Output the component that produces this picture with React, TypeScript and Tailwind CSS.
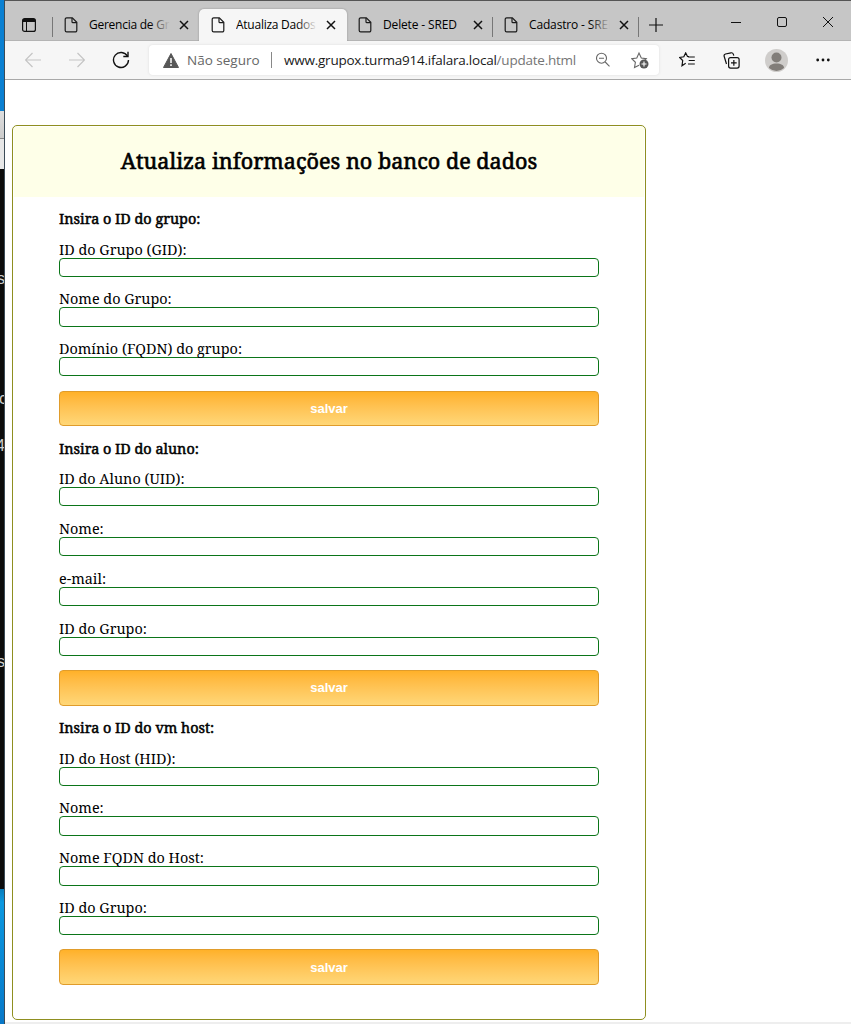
import React from "react";

type TabProps = { title: string; width: string; layout: string; tracking: string; active?: boolean; fade?: boolean };

function PageIcon() {
  return (
    <svg className="h-4 w-3.5 shrink-0" viewBox="0 0 14 16" fill="none" stroke="#1b1b1b" strokeWidth="1.2">
      <path d="M2.700 .8H8.300L12.800 5.300V13.400a1.500 1.500 0 0 1-1.500 1.500H2.700a1.500 1.500 0 0 1-1.500-1.500V2.300a1.500 1.500 0 0 1 1.500-1.500z" />
      <path d="M8 1v3.700a1 1 0 0 0 1 1h3.700" />
    </svg>
  );
}

function CloseIcon() {
  return (
    <svg className="h-2.5 w-2.5 shrink-0" viewBox="0 0 10 10" stroke="#111" strokeWidth="1.5">
      <path d="M1 1l8 8M9 1L1 9" />
    </svg>
  );
}

function Tab({ title, width, layout, tracking, active, fade }: TabProps) {
  return (
    <div
      className={`flex shrink-0 items-center ${width} ${layout} ${
        active ? "h-8 rounded-t-[5px] bg-[#f6f6f6] shadow-[0_0_2px_#888]" : "h-8"
      }`}
    >
      <PageIcon />
      <div className={`relative ml-[11px] w-[81px] overflow-hidden whitespace-nowrap text-[12px] leading-4 ${tracking}`}>
        {title}
        {fade && (
          <div
            className={`absolute inset-y-0 right-0 w-5 bg-linear-to-r ${
              active ? "from-[#f6f6f600] to-[#f6f6f6]" : "from-[#c6c6c600] to-[#c6c6c6]"
            }`}
          />
        )}
      </div>
      <div className="ml-[8.5px] flex">
        <CloseIcon />
      </div>
    </div>
  );
}

function Separator() {
  return <div className="mt-1 h-5 w-px shrink-0 bg-[#777]" />;
}

function TabBar() {
  return (
    <div className="flex h-[41px] items-end border-t border-[#555] bg-[#c6c6c6] shadow-[inset_0_-1px_0_#b4b4b4]">
      <div className="flex h-8 w-[47px] shrink-0 items-center pl-[17px]">
        <svg className="h-3.5 w-3.5" viewBox="0 0 14 14" fill="none" stroke="#111">
          <rect x=".6" y=".6" width="12.800" height="12.800" rx="2" strokeWidth="1.200" />
          <path d="M1 2.500h12" strokeWidth="3" />
          <path d="M4.500 4v9" />
        </svg>
      </div>
      <div className="flex h-8 items-center">
        <Separator />
        <Tab title="Gerencia de Grupos" width="w-[146px]" layout="pl-[11px]" tracking="tracking-[-0.25px]" fade />
        <Tab title="Atualiza Dados - SRED" width="w-[148px]" layout="pl-[12px]" tracking="tracking-[-0.25px]" active fade />
        <Tab title="Delete - SRED" width="w-[145px]" layout="pl-[11px]" tracking="tracking-[-0.15px]" />
        <Separator />
        <Tab title="Cadastro - SRED" width="w-[145px]" layout="pl-[11px]" tracking="tracking-[-0.15px]" fade />
        <Separator />
      </div>
      <svg className="mb-[9px] ml-[10px] h-3.5 w-3.5 shrink-0" viewBox="0 0 14 14" stroke="#111" strokeWidth="1.200">
        <path d="M7 0v14M0 7h14" />
      </svg>
      <div className="mb-[14px] ml-[68px] flex items-center gap-9">
        <svg className="h-2.5 w-2.5" viewBox="0 0 10 10" stroke="#111">
          <path d="M0 5.500h10" />
        </svg>
        <svg className="h-2.5 w-2.5" viewBox="0 0 10 10" stroke="#111" fill="none">
          <rect x=".5" y=".5" width="9" height="9" rx="1.500" />
        </svg>
        <svg className="h-2.5 w-2.5" viewBox="0 0 10 10" stroke="#111">
          <path d="M0 0l10 10M10 0L0 10" />
        </svg>
      </div>
    </div>
  );
}

function Toolbar() {
  return (
    <div className="flex h-[39px] items-center border-b border-[#a9a9a9] bg-[#f6f6f6]">
      <svg className="ml-5 h-4 w-4 shrink-0" viewBox="0 0 16 16" fill="none" stroke="#c4c4c4" strokeWidth="1.200">
        <path d="M16 8H.8M7.500 1L.5 8l7 7" />
      </svg>
      <svg className="ml-7 h-4 w-4 shrink-0" viewBox="0 0 16 16" fill="none" stroke="#c4c4c4" strokeWidth="1.200">
        <path d="M0 8h15.200M8.500 1l7 7-7 7" />
      </svg>
      <svg className="ml-[27px] h-[18px] w-[18px] shrink-0" viewBox="0 0 18 18" fill="none" stroke="#111" strokeWidth="1.400">
        <path d="M15.500 5.200A7.500 7.500 0 1 0 16.500 9" />
        <path d="M16 .8v4.700h-4.700" />
      </svg>
      <div className="ml-[19px] flex h-[30px] w-[510px] shrink-0 items-center rounded bg-white shadow-[0_0_3px_#ddd]">
        <svg className="ml-[14px] h-[15px] w-4 shrink-0" viewBox="0 0 16 15">
          <path d="M8 .5L15.500 14.500H.5z" fill="#575757" stroke="#575757" strokeLinejoin="round" />
          <path d="M8 5v5M8 11.300v1.700" stroke="#fff" strokeWidth="1.500" />
        </svg>
        <div className="ml-2 w-[75px] whitespace-nowrap text-[13.500px] text-[#666]">Não seguro</div>
        <div className="ml-[9px] h-4 w-px bg-[#888]" />
        <div className="ml-3 w-[311px] whitespace-nowrap text-[13.500px] tracking-[-0.23px] text-[#1a1a1a]">
          www.grupox.turma914.ifalara.local<span className="text-[#757575]">/update.html</span>
        </div>
        <svg className="h-4 w-4 shrink-0" viewBox="0 0 16 16" fill="none" stroke="#666" strokeWidth="1.100">
          <circle cx="6.500" cy="6.200" r="5" />
          <path d="M10.200 10l4.300 4.300M4 6.200h5" />
        </svg>
        <svg className="ml-5 h-[18px] w-[18px] shrink-0" viewBox="0 0 18 18" fill="none" stroke="#666" strokeWidth="1.100">
          <path d="M8 14.200l-4.500 2.300.9-5.200L.8 7.700l5-.7L8 2l2.300 5 5 .7-1.500 1.500" />
          <circle cx="13" cy="13" r="4.500" fill="#575757" stroke="none" />
          <path d="M13 10.500v5M10.500 13h5" stroke="#fff" />
        </svg>
      </div>
      <svg className="ml-5 h-4 w-[17px] shrink-0" viewBox="0 0 17 16" fill="none" stroke="#111" strokeWidth="1.200">
        <path d="M10 4.700L8.500 4.500 6.700.9 4.800 4.800.7 5.500l3 3-.7 5.200 3.700-2.400M9 5h6.800M9.700 8.500h6.100M9 12h6.800" />
      </svg>
      <svg className="ml-[27px] h-[17px] w-[17px] shrink-0" viewBox="0 0 17 17" fill="none" stroke="#111" strokeWidth="1.200">
        <rect x="5.600" y="5.600" width="10.500" height="10.500" rx="2" />
        <path d="M10.850 8v5.700M8 10.850h5.700M3.500 12L1.200 4.500A2 2 0 0 1 2.500 2L8 .8a2 2 0 0 1 2.300 1.300l.5 1.500" />
      </svg>
      <svg className="ml-[25px] h-[23px] w-[23px] shrink-0" viewBox="0 0 23 23">
        <circle cx="11.500" cy="11.500" r="11.500" fill="#cfcdcb" />
        <circle cx="11.500" cy="8.500" r="5" fill="#817d79" />
        <path d="M4 19c0-3 3-4.500 7.500-4.500S19 16 19 19a11 11 0 0 1-15 0z" fill="#817d79" />
      </svg>
      <svg className="ml-7 h-1 w-[14px] shrink-0" viewBox="0 0 14 4" fill="#111">
        <circle cx="1.700" cy="2" r="1.400" />
        <circle cx="7" cy="2" r="1.400" />
        <circle cx="12.300" cy="2" r="1.400" />
      </svg>
    </div>
  );
}

type Group = { title: string; fields: string[] };

const groups: Group[] = [
  {
    title: "Insira o ID do grupo:",
    fields: ["ID do Grupo (GID):", "Nome do Grupo:", "Domínio (FQDN) do grupo:"],
  },
  {
    title: "Insira o ID do aluno:",
    fields: ["ID do Aluno (UID):", "Nome:", "e-mail:", "ID do Grupo:"],
  },
  {
    title: "Insira o ID do vm host:",
    fields: ["ID do Host (HID):", "Nome:", "Nome FQDN do Host:", "ID do Grupo:"],
  },
];

function FormGroup({ group }: { group: Group }) {
  return (
    <section>
      <h2 className="flex h-[45.09px] items-center text-[14.4px] [-webkit-text-stroke:0.5px_black]">
        {group.title}
      </h2>
      <div className="flex flex-col gap-[14.46px]">
        {group.fields.map((field) => (
          <label key={field} className="block">
            <span className="block h-4 whitespace-nowrap text-[14.4px] leading-4">{field}</span>
            <input className="block h-[19.35px] w-full rounded border border-[#0b7519] bg-white" />
          </label>
        ))}
      </div>
      <button className="mt-[14.16px] block h-[35.47px] w-full rounded border border-[#e09c2b] bg-linear-to-b from-[#ffb128] to-[#ffd777] pt-[0.5px] font-['Liberation_Sans',sans-serif] text-[13px] font-bold tracking-[-0.05px] text-white">
        salvar
      </button>
    </section>
  );
}

function BackgroundStrip() {
  return (
    <div className="flex h-full w-[5px] shrink-0 flex-col overflow-hidden border-r border-[#3b4b57] font-['Liberation_Sans',sans-serif] text-[16px] leading-4 text-[#ccc]">
      <div className="h-[111px] shrink-0 bg-[#0a80d2]" />
      <div className="h-7 shrink-0 border-b border-[#888] bg-linear-to-b from-[#dedede] to-[#cccccc]" />
      <div className="h-[30px] shrink-0 bg-[#e7e7e7]" />
      <div className="flex h-[720px] shrink-0 flex-col bg-[#0c0c0c]">
        <span className="-ml-[3px] mt-[102px]">s</span>
        <span className="-ml-px mt-[104px]">c</span>
        <span className="-ml-[4px] mt-[31px]">4</span>
        <span className="-ml-[3px] mt-[200px]">s</span>
      </div>
      <div className="flex-1 bg-linear-to-b from-[#087cbb] via-[#0c98e0] via-10% to-[#0878c8]" />
    </div>
  );
}

export default function App() {
  return (
    <div className="flex h-[1024px] w-[851px] overflow-hidden bg-white">
      <BackgroundStrip />
      <div className="flex w-[846px] flex-col font-['Open_Sans','Noto_Sans',sans-serif] text-black">
        <TabBar />
        <Toolbar />
        <main className="h-[942px] pl-[7px] pt-[45px] font-['Noto_Serif','Droid_Serif','DejaVu_Serif_Condensed','DejaVu_Serif',serif]">
          <div className="h-[895px] w-[634px] rounded-[5px] border border-[#8f8f20] p-px">
            <h1 className="flex h-[69.5px] items-center justify-center bg-[#feffe8] pb-0.5 text-[21.6px] [-webkit-text-stroke:0.6px_black]">
              Atualiza informações no banco de dados
            </h1>
            <div className="-mt-[0.08px] px-[45px]">
              {groups.map((group) => (
                <FormGroup key={group.title} group={group} />
              ))}
            </div>
          </div>
        </main>
        <div className="h-0.5 bg-[#eeeeee]" />
      </div>
    </div>
  );
}
